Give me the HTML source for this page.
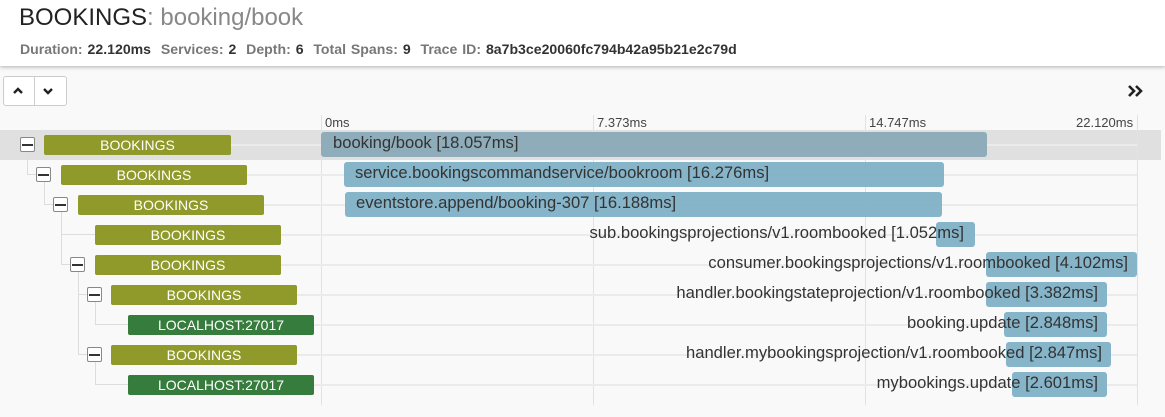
<!DOCTYPE html><html><head><style>
body{margin:0;width:1165px;height:417px;background:#f9f9f9;font-family:"Liberation Sans",sans-serif;position:relative;overflow:hidden}
.hdr{position:absolute;left:0;top:0;width:1165px;height:66px;background:#fff;box-shadow:0 1px 4px rgba(0,0,0,.3)}
.a{position:absolute}
.t{left:19px;top:4px;font-size:24px;color:#222;white-space:nowrap}
.t span{color:#888}
.s{left:20px;top:41px;font-size:14.1px;font-weight:bold;color:#777;white-space:nowrap;word-spacing:1px}
.s b{color:#333}
.btn{top:76px;height:28px;border:1px solid #ccc;border-radius:3px;background:#fff}
.vl{width:1px;background:#e2e2e2;top:115px;height:290px}
.tk{top:115px;font-size:13px;color:#444}
.hl{height:2px;background:#ebebeb}
.lb{height:20px;border-radius:2px;color:#fff;font-size:14px;text-align:center;line-height:20px}
.ol{background:#8f9a2a}.gr{background:#367c3c}
.bar{height:25px;border-radius:3px;background:#7fb0c6;opacity:.95}
.tx{font-size:16.6px;color:#333;white-space:nowrap;line-height:25px}
.bx{width:15px;height:15px;border:1px solid #888;border-radius:2px;background:#fff;box-sizing:border-box}
.bx:after{content:"";position:absolute;left:1px;right:1px;top:6px;height:2px;background:#333}
.tr{background:#ddd}
</style></head><body>
<div class="a" style="left:0;top:130px;width:1161px;height:30px;background:#e0e0e0"></div>
<div class="hdr"></div>
<div class="a t">BOOKINGS<span>: booking/book</span></div>
<div class="a s">Duration: <b>22.120ms</b>&nbsp; Services: <b>2</b>&nbsp; Depth: <b>6</b>&nbsp; Total Spans: <b>9</b>&nbsp; Trace ID: <b>8a7b3ce20060fc794b42a95b21e2c79d</b></div>
<div class="a btn" style="left:3px;width:62px"></div>
<div class="a" style="left:34px;top:77px;width:1px;height:28px;background:#ccc"></div>
<svg class="a" style="left:10px;top:84px" width="50" height="14"><path d="M4 9l4-4 4 4M34 5l4 4 4-4" fill="none" stroke="#222" stroke-width="2.4"/></svg>
<svg class="a" style="left:1127px;top:84px" width="18" height="14"><path d="M2 2l5 5-5 5M9 2l5 5-5 5" fill="none" stroke="#222" stroke-width="2.6"/></svg>
<div class="a vl" style="left:321px"></div><div class="a vl" style="left:593px"></div><div class="a vl" style="left:865px"></div><div class="a vl" style="left:1137px"></div>
<div class="a tk" style="left:325px">0ms</div><div class="a tk" style="left:597px">7.373ms</div><div class="a tk" style="left:869px">14.747ms</div><div class="a tk" style="left:1076px">22.120ms</div>
<div class="a hl" style="left:231px;top:144px;width:906px"></div>
<div class="a hl" style="left:247px;top:174px;width:890px"></div>
<div class="a hl" style="left:264px;top:204px;width:873px"></div>
<div class="a hl" style="left:281px;top:234px;width:856px"></div>
<div class="a hl" style="left:281px;top:264px;width:856px"></div>
<div class="a hl" style="left:297px;top:294px;width:840px"></div>
<div class="a hl" style="left:314px;top:324px;width:823px"></div>
<div class="a hl" style="left:297px;top:354px;width:840px"></div>
<div class="a hl" style="left:314px;top:384px;width:823px"></div>
<div class="a tr" style="left:27px;top:152px;width:1px;height:23px"></div><div class="a tr" style="left:27px;top:174px;width:10px;height:1px"></div>
<div class="a tr" style="left:44px;top:182px;width:1px;height:23px"></div><div class="a tr" style="left:44px;top:204px;width:10px;height:1px"></div>
<div class="a tr" style="left:61px;top:212px;width:1px;height:53px"></div><div class="a tr" style="left:61px;top:234px;width:34px;height:1px"></div><div class="a tr" style="left:61px;top:264px;width:10px;height:1px"></div>
<div class="a tr" style="left:78px;top:272px;width:1px;height:83px"></div><div class="a tr" style="left:78px;top:294px;width:10px;height:1px"></div><div class="a tr" style="left:78px;top:354px;width:10px;height:1px"></div>
<div class="a tr" style="left:95px;top:302px;width:1px;height:23px"></div><div class="a tr" style="left:95px;top:324px;width:33px;height:1px"></div>
<div class="a tr" style="left:95px;top:362px;width:1px;height:23px"></div><div class="a tr" style="left:95px;top:384px;width:33px;height:1px"></div>
<div class="a bx" style="left:20px;top:137px"></div><div class="a bx" style="left:36px;top:167px"></div><div class="a bx" style="left:53px;top:197px"></div>
<div class="a bx" style="left:70px;top:257px"></div><div class="a bx" style="left:87px;top:287px"></div><div class="a bx" style="left:87px;top:347px"></div>
<div class="a lb ol" style="left:44px;top:135px;width:187px">BOOKINGS</div>
<div class="a lb ol" style="left:61px;top:165px;width:186px">BOOKINGS</div>
<div class="a lb ol" style="left:78px;top:195px;width:186px">BOOKINGS</div>
<div class="a lb ol" style="left:95px;top:225px;width:186px">BOOKINGS</div>
<div class="a lb ol" style="left:95px;top:255px;width:186px">BOOKINGS</div>
<div class="a lb ol" style="left:111px;top:285px;width:186px">BOOKINGS</div>
<div class="a lb gr" style="left:128px;top:315px;width:186px">LOCALHOST:27017</div>
<div class="a lb ol" style="left:111px;top:345px;width:186px">BOOKINGS</div>
<div class="a lb gr" style="left:128px;top:375px;width:186px">LOCALHOST:27017</div>
<div class="a bar" style="left:321px;top:132px;width:666px;background:#89a9b6"></div>
<div class="a bar" style="left:344px;top:162px;width:600px"></div>
<div class="a bar" style="left:345px;top:192px;width:597px"></div>
<div class="a bar" style="left:936px;top:222px;width:39px"></div>
<div class="a bar" style="left:986px;top:252px;width:151px"></div>
<div class="a bar" style="left:986px;top:282px;width:121px"></div>
<div class="a bar" style="left:1004px;top:312px;width:103px"></div>
<div class="a bar" style="left:1006px;top:342px;width:105px"></div>
<div class="a bar" style="left:1012px;top:372px;width:95px"></div>
<div class="a tx" style="left:333px;top:130px">booking/book [18.057ms]</div>
<div class="a tx" style="left:355px;top:160px">service.bookingscommandservice/bookroom [16.276ms]</div>
<div class="a tx" style="left:356px;top:190px">eventstore.append/booking-307 [16.188ms]</div>
<div class="a tx" style="right:201px;top:220px">sub.bookingsprojections/v1.roombooked [1.052ms]</div>
<div class="a tx" style="right:37px;top:250px">consumer.bookingsprojections/v1.roombooked [4.102ms]</div>
<div class="a tx" style="right:67px;top:280px">handler.bookingstateprojection/v1.roombooked [3.382ms]</div>
<div class="a tx" style="right:67px;top:310px">booking.update [2.848ms]</div>
<div class="a tx" style="right:63px;top:340px">handler.mybookingsprojection/v1.roombooked [2.847ms]</div>
<div class="a tx" style="right:67px;top:370px">mybookings.update [2.601ms]</div>
</body></html>
